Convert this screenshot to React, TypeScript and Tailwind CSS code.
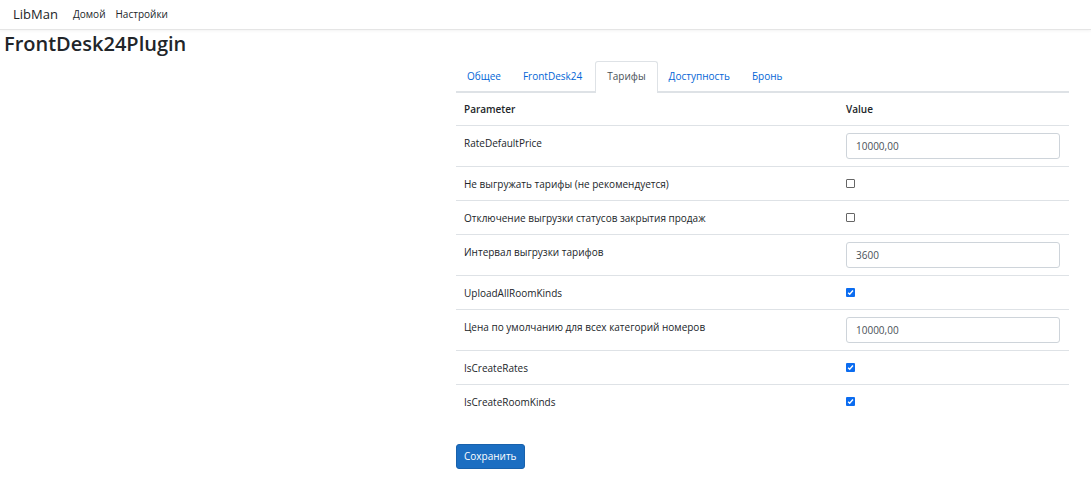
import React from 'react';

const font = { fontFamily: '"Open Sans", "Noto Sans", Arial, sans-serif' };

type Row = { label: string; kind: 'input' | 'check'; value?: string; checked?: boolean };

const rows: Row[] = [
  { label: 'RateDefaultPrice', kind: 'input', value: '10000,00' },
  { label: 'Не выгружать тарифы (не рекомендуется)', kind: 'check', checked: false },
  { label: 'Отключение выгрузки статусов закрытия продаж', kind: 'check', checked: false },
  { label: 'Интервал выгрузки тарифов', kind: 'input', value: '3600' },
  { label: 'UploadAllRoomKinds', kind: 'check', checked: true },
  { label: 'Цена по умолчанию для всех категорий номеров', kind: 'input', value: '10000,00' },
  { label: 'IsCreateRates', kind: 'check', checked: true },
  { label: 'IsCreateRoomKinds', kind: 'check', checked: true },
];

const tabs = ['Общее', 'FrontDesk24', 'Тарифы', 'Доступность', 'Бронь'];

function Checkbox({ checked }: { checked?: boolean }) {
  if (checked) {
    return (
      <span className="inline-flex w-[9px] h-[9px] rounded-[1px] bg-[#0b6cf0] items-center justify-center">
        <svg width="7" height="7" viewBox="0 0 8 8">
          <path d="M1.3 4.2 L3.1 6 L6.8 1.8" stroke="#fff" strokeWidth="1.6" fill="none" />
        </svg>
      </span>
    );
  }
  return <span className="inline-block w-[9px] h-[9px] rounded-[1px] border border-[#666] bg-white" />;
}

export default function App() {
  return (
    <div className="min-h-screen bg-white text-[#212529]" style={font}>
      {/* Navbar */}
      <div className="h-[30px] flex items-center border-b border-[#e5e5e5] shadow-[0_1px_3px_rgba(0,0,0,0.05)]">
        <span className="ml-[13px] text-[13px] text-[#212529]">LibMan</span>
        <span className="ml-[15px] text-[10px] text-[#212529]">Домой</span>
        <span className="ml-[10px] text-[10px] text-[#212529]">Настройки</span>
      </div>

      <h1 className="ml-[4px] mt-[2px] text-[20px] leading-[24px] font-semibold">FrontDesk24Plugin</h1>

      <div className="flex">
        <div className="w-[456px] shrink-0" />
        <div className="w-[613px]">
          {/* Tabs */}
          <div className="mt-[5px] flex border-b-2 border-[#dee2e6] text-[10px]">
            {tabs.map((t) =>
              t === 'Тарифы' ? (
                <div
                  key={t}
                  className="px-[11px] ml-[2px] flex items-center border border-b-0 border-[#dee2e6] rounded-t-[3px] text-[#495057] bg-white -mb-[2px] pb-[2px] h-[32px]"
                >
                  {t}
                </div>
              ) : (
                <div key={t} className="h-[30px] px-[11px] flex items-center text-[#0366d6]">
                  {t}
                </div>
              )
            )}
          </div>

          {/* Table */}
          <div className="text-[10px]">
            <div className="flex h-[33px] items-center border-b border-[#dee2e6] font-semibold">
              <div className="w-[382px] pl-[8px]">Parameter</div>
              <div className="pl-[8px]">Value</div>
            </div>
            {rows.map((r) => (
              <div key={r.label} className="flex border-b border-[#dee2e6] last:border-b-0">
                <div className="w-[382px] pl-[8px] pt-[9px] pb-[8px] leading-[16px]">{r.label}</div>
                <div className="flex-1 pl-[8px] pr-[9px]">
                  {r.kind === 'input' ? (
                    <div className="my-[7px] h-[26px] border border-[#ced4da] rounded-[3px] flex items-center pl-[9px] text-[#495057] text-[10px]">
                      {r.value}
                    </div>
                  ) : (
                    <div className="h-[33px] flex items-center">
                      <Checkbox checked={r.checked} />
                    </div>
                  )}
                </div>
              </div>
            ))}
          </div>

          <button className="mt-[26px] h-[25px] px-[7px] rounded-[3px] bg-[#1b6ec2] border border-[#1861ac] text-white text-[10px] font-medium">
            Сохранить
          </button>
        </div>
      </div>
    </div>
  );
}
